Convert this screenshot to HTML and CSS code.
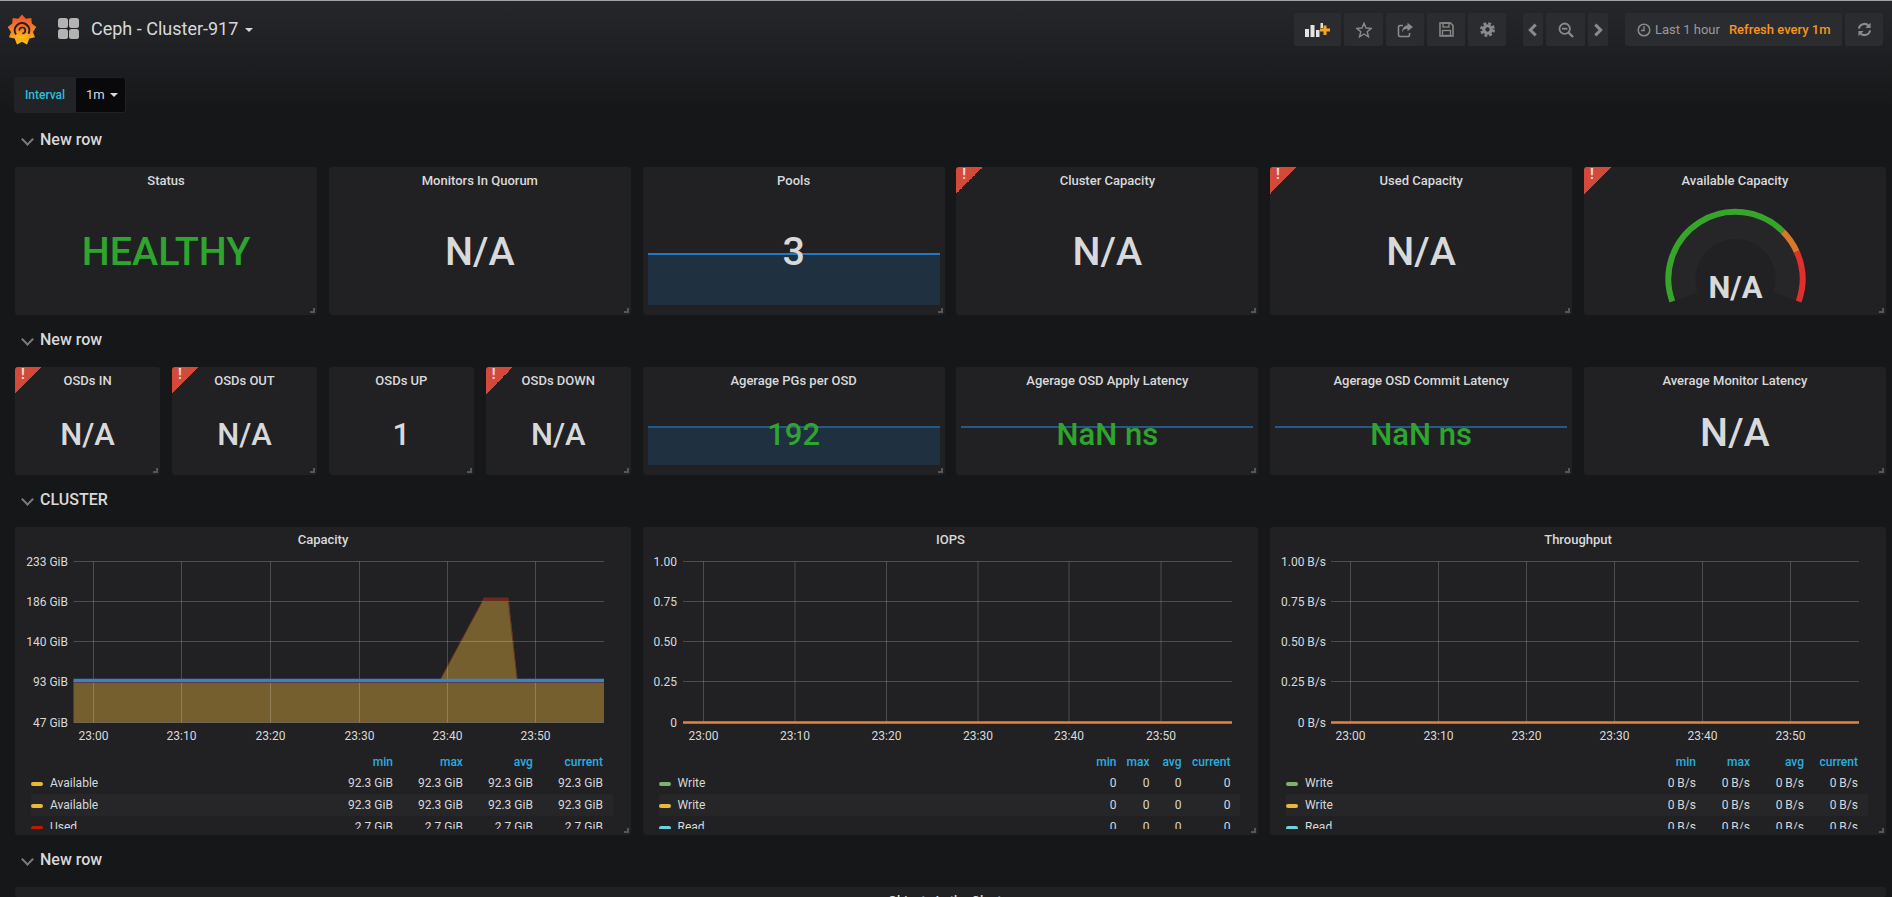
FILE: index.html
```html
<!DOCTYPE html>
<html lang="en">
<head>
    <meta charset="UTF-8">
    <meta name="viewport" content="width=device-width, initial-scale=1.0">
    <title>Ceph - Cluster-917 - Grafana</title>
    <link rel="stylesheet" href="styles.css">
</head>
<body>

    <nav class="navbar">
        <svg class="logo" viewBox="0 0 28 31" width="28" height="31">
            <defs>
                <linearGradient id="logo-grad" x1="0" y1="0" x2="0" y2="1">
                    <stop offset="0" stop-color="#ee4f27"/>
                    <stop offset="0.55" stop-color="#f5872a"/>
                    <stop offset="1" stop-color="#fcc60e"/>
                </linearGradient>
            </defs>
            <polygon fill="url(#logo-grad)" points="14,0.5 17.8,4.7 23.3,3.9 23.8,9.5 28.300,13 25,17.900 27,23.25 21.300,24.600 19,30.600 14,27.800 9,30.600 6.700,24.600 1,23.25 3,17.900 -0.300,13 4.200,9.500 4.700,3.900 10.200,4.700"/>
            <circle cx="14" cy="16" r="8.500" fill="url(#logo-grad)"/>
            <path d="M8 20.500A7.300 7.300 0 1 1 20.500 19.800" fill="none" stroke="#1d1f21" stroke-width="2"/>
            <path d="M11.300 16.500a3 3 0 1 1 3 3" fill="none" stroke="#1d1f21" stroke-width="1.600"/>
        </svg>
        <svg class="grid-icon" viewBox="0 0 21 21" width="21" height="21">
            <rect x="0" y="0" width="10" height="10" rx="2.5"/>
            <rect x="11" y="0" width="10" height="10" rx="2.5"/>
            <rect x="0" y="11" width="10" height="10" rx="2.5"/>
            <rect x="11" y="11" width="10" height="10" rx="2.5"/>
        </svg>
        <span class="dash-title">Ceph - Cluster-917</span>
        <span class="caret dash-caret"></span>

        <div class="nav-buttons">
            <button class="nav-btn btn-add">
                <svg viewBox="0 0 25 14" width="25" height="14">
                    <rect x="0" y="6" width="4" height="8" fill="#e3e3e3"/>
                    <rect x="5.500" y="2" width="4" height="12" fill="#e3e3e3"/>
                    <rect x="11" y="7" width="3.500" height="7" fill="#e3e3e3"/>
                    <rect x="15.500" y="0" width="2.500" height="5" fill="#e3e3e3"/>
                    <path d="M18.500 2.500h3v3h3.500v3h-3.500v3.500h-3v-3.500h-3.500v-3h3.500z" fill="#f5a623"/>
                </svg>
            </button>
            <button class="nav-btn w39">
                <svg viewBox="0 0 16 16" width="16" height="16"><polygon points="8,1.2 10,6 15.200,6.400 11.200,9.700 12.500,14.800 8,12 3.500,14.800 4.800,9.700 0.800,6.400 6,6" fill="none" stroke="#8a8a8a" stroke-width="1.400"/></svg>
            </button>
            <button class="nav-btn w38">
                <svg viewBox="0 0 16 16" width="16" height="16">
                    <path d="M6 3.500H3a1.500 1.500 0 0 0-1.500 1.500v8A1.500 1.500 0 0 0 3 14.500h8a1.500 1.500 0 0 0 1.500-1.500v-2" fill="none" stroke="#8a8a8a" stroke-width="1.600"/>
                    <path d="M10.500 0.800L16 5l-5.500 4.300V6.800C8 6.800 6 7.800 5 10.500 5 6.500 7.500 3.600 10.500 3.300z" fill="#8a8a8a"/>
                </svg>
            </button>
            <button class="nav-btn w38">
                <svg viewBox="0 0 15 15" width="15" height="15">
                    <path d="M1 1h10.500L14 3.500V14H1z" fill="none" stroke="#8a8a8a" stroke-width="1.500"/>
                    <rect x="4" y="1" width="6" height="4" fill="none" stroke="#8a8a8a" stroke-width="1.300"/>
                    <rect x="3.500" y="8.500" width="8" height="5" fill="none" stroke="#8a8a8a" stroke-width="1.300"/>
                </svg>
            </button>
            <button class="nav-btn w38">
                <svg viewBox="0 0 16 16" width="15" height="15">
                    <circle cx="8" cy="8" r="4" fill="none" stroke="#8a8a8a" stroke-width="3.400"/>
                    <circle cx="8" cy="8" r="6.600" fill="none" stroke="#8a8a8a" stroke-width="2.600" stroke-dasharray="3 2.184"/>
                </svg>
            </button>

            <button class="nav-btn w20 group-start">
                <svg viewBox="0 0 9 13" width="10" height="14"><path d="M7 1.500L2 6.500l5 5" fill="none" stroke="#8a8a8a" stroke-width="2.800"/></svg>
            </button>
            <button class="nav-btn w39">
                <svg viewBox="0 0 16 16" width="16" height="16">
                    <circle cx="6.700" cy="6.700" r="5.200" fill="none" stroke="#8a8a8a" stroke-width="1.800"/>
                    <path d="M10.500 10.500L15 15" stroke="#8a8a8a" stroke-width="2.400"/>
                    <path d="M4 6.700h5.400" stroke="#8a8a8a" stroke-width="1.800"/>
                </svg>
            </button>
            <button class="nav-btn w20">
                <svg viewBox="0 0 9 13" width="10" height="14"><path d="M2 1.500l5 5-5 5" fill="none" stroke="#8a8a8a" stroke-width="2.800"/></svg>
            </button>

            <button class="nav-btn btn-time group-start">
                <svg viewBox="0 0 14 14" width="14" height="14">
                    <circle cx="7" cy="7" r="5.800" fill="none" stroke="#8a8a8a" stroke-width="1.500"/>
                    <path d="M7 3.200V7.500H4" fill="none" stroke="#8a8a8a" stroke-width="1.400"/>
                </svg>
                <span class="time-range">Last 1 hour</span>
                <span class="time-refresh">Refresh every 1m</span>
            </button>
            <button class="nav-btn w38">
                <svg viewBox="0 0 16 16" width="15" height="15">
                    <path d="M2 7a6 6 0 0 1 10.300-3" fill="none" stroke="#8a8a8a" stroke-width="2.200"/>
                    <polygon points="14.500,0.800 14.500,6.300 9,6.300" fill="#8a8a8a"/>
                    <path d="M14 9a6 6 0 0 1-10.300 3" fill="none" stroke="#8a8a8a" stroke-width="2.200"/>
                    <polygon points="1.500,15.200 1.500,9.700 7,9.700" fill="#8a8a8a"/>
                </svg>
            </button>
        </div>
    </nav>

    <div class="variables">
        <span class="var-label">Interval</span>
        <span class="var-value">1m<span class="caret"></span></span>
    </div>

    <div class="row-head first"><span class="chevron"></span>New row</div>
    <section class="panels row-a">
        <div class="panel span-2">
            <div class="panel-title">Status</div>
            <div class="stat-value green">HEALTHY</div>
            <i class="resize"></i>
        </div>
        <div class="panel span-2">
            <div class="panel-title">Monitors In Quorum</div>
            <div class="stat-value">N/A</div>
            <i class="resize"></i>
        </div>
        <div class="panel span-2">
            <div class="panel-title">Pools</div>
            <div class="spark bright"></div>
            <div class="stat-value">3</div>
            <i class="resize"></i>
        </div>
        <div class="panel span-2">
            <b class="alert">!</b>
            <div class="panel-title">Cluster Capacity</div>
            <div class="stat-value">N/A</div>
            <i class="resize"></i>
        </div>
        <div class="panel span-2">
            <b class="alert">!</b>
            <div class="panel-title">Used Capacity</div>
            <div class="stat-value">N/A</div>
            <i class="resize"></i>
        </div>
        <div class="panel span-2">
            <b class="alert">!</b>
            <div class="panel-title">Available Capacity</div>
            <svg class="gauge" viewBox="0 0 302 120" width="302" height="120">
                <path d="M91.200 105.400A64 64 0 1 1 211.800 105.400L189.200 97.400A40 40 0 1 0 113.800 97.400Z" fill="#262628"/>
                <g fill="none" stroke-width="6">
                    <path d="M88.300 106.400A67 67 0 0 1 198.900 36.600" stroke="#37a52a"/>
                    <path d="M198.900 36.600A67 67 0 0 1 212.700 56.700" stroke="#d8782a"/>
                    <path d="M212.700 56.700A67 67 0 0 1 214.700 106.400" stroke="#e02f2f"/>
                </g>
                <text class="gauge-text" x="151.500" y="103" text-anchor="middle">N/A</text>
            </svg>
            <i class="resize"></i>
        </div>
    </section>

    <div class="row-head"><span class="chevron"></span>New row</div>
    <section class="panels row-b">
        <div class="panel">
            <b class="alert">!</b>
            <div class="panel-title">OSDs IN</div>
            <div class="stat-value small">N/A</div>
            <i class="resize"></i>
        </div>
        <div class="panel">
            <b class="alert">!</b>
            <div class="panel-title">OSDs OUT</div>
            <div class="stat-value small">N/A</div>
            <i class="resize"></i>
        </div>
        <div class="panel">
            <div class="panel-title">OSDs UP</div>
            <div class="stat-value small">1</div>
            <i class="resize"></i>
        </div>
        <div class="panel">
            <b class="alert">!</b>
            <div class="panel-title">OSDs DOWN</div>
            <div class="stat-value small">N/A</div>
            <i class="resize"></i>
        </div>
        <div class="panel span-2">
            <div class="panel-title">Agerage PGs per OSD</div>
            <div class="spark"></div>
            <div class="stat-value small green">192</div>
            <i class="resize"></i>
        </div>
        <div class="panel span-2">
            <div class="panel-title">Agerage OSD Apply Latency</div>
            <div class="spark line-only"></div>
            <div class="stat-value small green">NaN ns</div>
            <i class="resize"></i>
        </div>
        <div class="panel span-2">
            <div class="panel-title">Agerage OSD Commit Latency</div>
            <div class="spark line-only"></div>
            <div class="stat-value small green">NaN ns</div>
            <i class="resize"></i>
        </div>
        <div class="panel span-2">
            <div class="panel-title">Average Monitor Latency</div>
            <div class="stat-value wide">N/A</div>
            <i class="resize"></i>
        </div>
    </section>

    <div class="row-head"><span class="chevron"></span>CLUSTER</div>
    <section class="panels row-c">
        <!-- Capacity -->
        <div class="panel span-4">
            <div class="panel-title">Capacity</div>
            <svg class="plot" viewBox="0 0 615 195" width="615" height="195">
                <polygon points="58.500,127 424,127 467,47 494,47 502.500,127 589,127 589,167.500 58.500,167.500" fill="#755f2f"/>
                <polygon points="467,47 469,43 493,43 494,47" fill="#6a2a1e"/>
                <polyline points="424,127 469,43 493,43 502.500,127" fill="none" stroke="#64301f" stroke-width="1"/>
                <path class="grid-lines" d="M58.500 6.500H589M58.500 46.500H589M58.500 86.500H589M58.500 126.500H589M58.500 167.500H589M78.500 6.500V167.500M166.500 6.500V167.500M255.500 6.500V167.500M344.500 6.500V167.500M432.500 6.500V167.500M520.500 6.500V167.500"/>
                <path d="M58.500 127.500H589" stroke="#5e2a1c" stroke-width="1"/>
                <path d="M58.500 125.500H589" stroke="#3f7fc4" stroke-width="3.500"/>
                <g class="axis y-axis">
                    <text x="53" y="10.500">233 GiB</text>
                    <text x="53" y="50.500">186 GiB</text>
                    <text x="53" y="90.500">140 GiB</text>
                    <text x="53" y="130.500">93 GiB</text>
                    <text x="53" y="171.500">47 GiB</text>
                </g>
                <g class="axis x-axis">
                    <text x="78.500" y="185">23:00</text>
                    <text x="166.500" y="185">23:10</text>
                    <text x="255.500" y="185">23:20</text>
                    <text x="344.500" y="185">23:30</text>
                    <text x="432.500" y="185">23:40</text>
                    <text x="520.500" y="185">23:50</text>
                </g>
            </svg>
            <div class="legend cols-capacity">
                <div class="legend-row legend-head"><span></span><span>min</span><span>max</span><span>avg</span><span>current</span></div>
                <div class="legend-row"><span class="series"><i class="swatch yellow"></i>Available</span><span>92.3 GiB</span><span>92.3 GiB</span><span>92.3 GiB</span><span>92.3 GiB</span></div>
                <div class="legend-row striped"><span class="series"><i class="swatch yellow"></i>Available</span><span>92.3 GiB</span><span>92.3 GiB</span><span>92.3 GiB</span><span>92.3 GiB</span></div>
                <div class="legend-row"><span class="series"><i class="swatch red"></i>Used</span><span>2.7 GiB</span><span>2.7 GiB</span><span>2.7 GiB</span><span>2.7 GiB</span></div>
            </div>
            <i class="resize"></i>
        </div>

        <!-- IOPS -->
        <div class="panel span-4">
            <div class="panel-title">IOPS</div>
            <svg class="plot" viewBox="0 0 616 195" width="616" height="195">
                <path class="grid-lines" d="M40 6.500H589M40 46.500H589M40 86.500H589M40 126.500H589M40 167.500H589M60.500 6.500V167.500M152 6.500V167.500M243.500 6.500V167.500M335 6.500V167.500M426 6.500V167.500M518 6.500V167.500"/>
                <path d="M40 167.500H589" stroke="#e5843a" stroke-width="2.500"/>
                <g class="axis y-axis">
                    <text x="34" y="10.500">1.00</text>
                    <text x="34" y="50.500">0.75</text>
                    <text x="34" y="90.500">0.50</text>
                    <text x="34" y="130.500">0.25</text>
                    <text x="34" y="171.500">0</text>
                </g>
                <g class="axis x-axis">
                    <text x="60.500" y="185">23:00</text>
                    <text x="152" y="185">23:10</text>
                    <text x="243.500" y="185">23:20</text>
                    <text x="335" y="185">23:30</text>
                    <text x="426" y="185">23:40</text>
                    <text x="518" y="185">23:50</text>
                </g>
            </svg>
            <div class="legend cols-iops">
                <div class="legend-row legend-head"><span></span><span>min</span><span>max</span><span>avg</span><span>current</span></div>
                <div class="legend-row"><span class="series"><i class="swatch green-sw"></i>Write</span><span>0</span><span>0</span><span>0</span><span>0</span></div>
                <div class="legend-row striped"><span class="series"><i class="swatch yellow"></i>Write</span><span>0</span><span>0</span><span>0</span><span>0</span></div>
                <div class="legend-row"><span class="series"><i class="swatch cyan"></i>Read</span><span>0</span><span>0</span><span>0</span><span>0</span></div>
            </div>
            <i class="resize"></i>
        </div>

        <!-- Throughput -->
        <div class="panel span-4">
            <div class="panel-title">Throughput</div>
            <svg class="plot" viewBox="0 0 615 195" width="615" height="195">
                <path class="grid-lines" d="M61 6.500H589M61 46.500H589M61 86.500H589M61 126.500H589M61 167.500H589M80.500 6.500V167.500M168.500 6.500V167.500M256.500 6.500V167.500M344.500 6.500V167.500M432.500 6.500V167.500M520.500 6.500V167.500"/>
                <path d="M61 167.500H589" stroke="#e5843a" stroke-width="2.500"/>
                <g class="axis y-axis">
                    <text x="56" y="10.500">1.00 B/s</text>
                    <text x="56" y="50.500">0.75 B/s</text>
                    <text x="56" y="90.500">0.50 B/s</text>
                    <text x="56" y="130.500">0.25 B/s</text>
                    <text x="56" y="171.500">0 B/s</text>
                </g>
                <g class="axis x-axis">
                    <text x="80.500" y="185">23:00</text>
                    <text x="168.500" y="185">23:10</text>
                    <text x="256.500" y="185">23:20</text>
                    <text x="344.500" y="185">23:30</text>
                    <text x="432.500" y="185">23:40</text>
                    <text x="520.500" y="185">23:50</text>
                </g>
            </svg>
            <div class="legend cols-throughput">
                <div class="legend-row legend-head"><span></span><span>min</span><span>max</span><span>avg</span><span>current</span></div>
                <div class="legend-row"><span class="series"><i class="swatch green-sw"></i>Write</span><span>0 B/s</span><span>0 B/s</span><span>0 B/s</span><span>0 B/s</span></div>
                <div class="legend-row striped"><span class="series"><i class="swatch yellow"></i>Write</span><span>0 B/s</span><span>0 B/s</span><span>0 B/s</span><span>0 B/s</span></div>
                <div class="legend-row"><span class="series"><i class="swatch cyan"></i>Read</span><span>0 B/s</span><span>0 B/s</span><span>0 B/s</span><span>0 B/s</span></div>
            </div>
            <i class="resize"></i>
        </div>
    </section>

    <div class="row-head"><span class="chevron"></span>New row</div>
    <section class="panels row-d">
        <div class="panel span-12">
            <div class="panel-title">Objects In the Cluster</div>
        </div>
    </section>

</body>
</html>
```

FILE: styles.css
```css
html, body {
    height: 100%;
    overflow: hidden;
}
body {
    margin: 0;
    font-family: Roboto, "Liberation Sans", sans-serif;
    font-size: 13px;
    color: #d8d9da;
    background: #161719 linear-gradient(#25272a 0, #161719 110px) no-repeat;
}

/* top bar */
.navbar {
    display: flex;
    align-items: center;
    height: 57px;
    border-top: 1px solid #a3a3a3;
    padding: 0 9px 0 8px;
}
.logo {
    margin-top: -1px;
    overflow: visible;
}
.grid-icon {
    margin-left: 22px;
    margin-top: -2px;
    fill: #b3b3b3;
}
.dash-title {
    margin-left: 12px;
    margin-top: -3px;
    font-size: 18px;
    color: #d8d9da;
}
.caret {
    display: inline-block;
    border-top: 4px solid #d8d9da;
    border-left: 4px solid transparent;
    border-right: 4px solid transparent;
}
.dash-caret {
    margin-left: 7px;
    margin-top: 0;
}
.nav-buttons {
    display: flex;
    gap: 3px;
    margin-left: auto;
}
.nav-btn {
    display: flex;
    align-items: center;
    justify-content: center;
    height: 33px;
    padding: 0;
    background: #2b2c2f;
    border: 0;
    border-radius: 2px;
    font: inherit;
}
.btn-add { width: 47px; }
.w39 { width: 39px; }
.w38 { width: 38px; }
.w20 { width: 20px; }
.group-start { margin-left: 14px; }
.btn-time {
    width: 217px;
    justify-content: flex-start;
    padding-left: 12px;
}
.time-range {
    margin-left: 4px;
    color: #9a9a9c;
}
.time-refresh {
    margin-left: 9px;
    font-weight: 500;
    color: #f7941d;
}

/* template variable */
.variables {
    display: flex;
    height: 36px;
    margin: 19px 0 2px 14px;
}
.var-label {
    width: 62px;
    line-height: 36px;
    text-align: center;
    font-size: 12px;
    font-weight: 500;
    color: #2bbfd6;
    background: #212327;
    border-radius: 3px 0 0 3px;
}
.var-value {
    width: 50px;
    line-height: 34px;
    padding-left: 10px;
    box-sizing: border-box;
    font-size: 13px;
    color: #d8d9da;
    background: #09090b;
    border: 1px solid #1f2023;
    border-left: 0;
    border-radius: 0 3px 3px 0;
}
.var-value .caret {
    margin-left: 5px;
    vertical-align: 2px;
}

/* row headers */
.row-head {
    display: flex;
    align-items: center;
    height: 52px;
    padding: 0 0 3px 40px;
    box-sizing: border-box;
    position: relative;
    font-size: 16px;
    font-weight: 500;
    color: #d8d9da;
}
.chevron {
    position: absolute;
    left: 23px;
    top: 20px;
    width: 7px;
    height: 7px;
    border-right: 2px solid #7b7b7e;
    border-bottom: 2px solid #7b7b7e;
    transform: rotate(45deg);
}

/* panels */
.panels {
    display: grid;
    grid-template-columns: repeat(12, 1fr);
    column-gap: 11.67px;
    margin: 0 6px 0 15px;
}
.row-a { height: 148px; }
.row-b { height: 108px; }
.row-c { height: 308px; }
.row-d { height: 10px; }
.panel {
    position: relative;
    display: flex;
    flex-direction: column;
    min-width: 0;
    background: #212124;
    border-radius: 3px;
    overflow: hidden;
}
.span-2 { grid-column: span 2; }
.span-4 { grid-column: span 4; }
.span-12 { grid-column: span 12; }
.panel-title {
    height: 28px;
    line-height: 28px;
    flex: none;
    text-align: center;
    font-size: 13px;
    font-weight: 500;
    color: #d8d9da;
}
.row-c .panel-title {
    line-height: 26px;
}
.stat-value {
    position: relative;
    flex: 1;
    display: flex;
    align-items: center;
    justify-content: center;
    padding-bottom: 8px;
    font-size: 39.5px;
    font-weight: 500;
}
.stat-value.small {
    padding-bottom: 2px;
    font-size: 31px;
}
.stat-value.wide {
    padding-bottom: 5px;
}
.green { color: #2fa52f; }
.resize {
    position: absolute;
    right: 2px;
    bottom: 2px;
    width: 3px;
    height: 3px;
    border-right: 2px solid #57575a;
    border-bottom: 2px solid #57575a;
}
.alert {
    position: absolute;
    left: 0;
    top: 0;
    width: 27px;
    height: 27px;
    padding-left: 6px;
    box-sizing: border-box;
    font-size: 14px;
    line-height: 15px;
    color: #f0dcd9;
    background: linear-gradient(135deg, #d44a3a 50%, transparent 50%);
}
.spark {
    position: absolute;
    left: 5px;
    right: 5px;
    top: 59px;
    bottom: 10px;
    border-top: 2px solid #225a8c;
    background: #1f3041;
}
.spark.bright {
    top: 86px;
    border-top-color: #1f78c1;
}
.spark.line-only {
    background: none;
}
.gauge {
    display: block;
}
.gauge-text {
    font-size: 31px;
    font-weight: 700;
    fill: #d8d9da;
}

/* graphs */
.plot {
    display: block;
    flex: none;
}
.grid-lines {
    fill: none;
    stroke: rgba(255, 255, 255, 0.2);
    stroke-width: 1;
}
.axis text {
    font-size: 12px;
    fill: #d8d9da;
}
.y-axis text { text-anchor: end; }
.x-axis text { text-anchor: middle; }

/* legend */
.legend {
    height: 79px;
    margin: 0 18px 0 16px;
    overflow: hidden;
    font-size: 12px;
}
.legend-row {
    display: grid;
    height: 22px;
    line-height: 22px;
    padding-right: 10px;
    text-align: right;
}
.legend-head {
    height: 22px;
    line-height: 25px;
    font-weight: 500;
    color: #29aee0;
}
.cols-capacity .legend-row { grid-template-columns: 1fr repeat(4, 70px); }
.cols-iops .legend-row { grid-template-columns: 1fr 33px 33px 32px 49px; }
.cols-throughput .legend-row { grid-template-columns: 1fr repeat(4, 54px); }
.striped { background: #262628; }
.series {
    display: flex;
    align-items: center;
    text-align: left;
}
.swatch {
    width: 12px;
    height: 4px;
    margin: 2px 7px 0 0;
    border-radius: 2px;
}
.yellow { background: #eab839; }
.red { background: #bf1b00; }
.green-sw { background: #7eb26d; }
.cyan { background: #6ed0e0; }
```
